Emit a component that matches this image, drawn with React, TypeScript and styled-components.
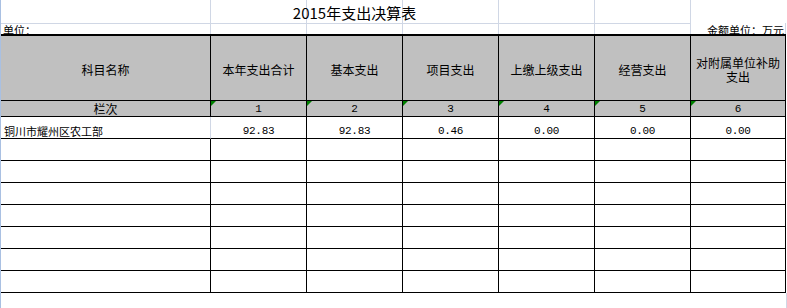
import styled, { createGlobalStyle, css } from "styled-components";

const GRID = "#d0d7e5";
const EDGE = "#a9c0e2";
const HEAD = "#c0c0c0";
const CJK = `"Noto Sans CJK SC", "Liberation Sans", sans-serif`;
const NUM = `"Liberation Mono", "DejaVu Sans Mono", monospace`;

const GlobalStyle = createGlobalStyle`
  html, body {
    margin: 0;
    padding: 0;
    background: #ffffff;
  }
  body {
    font-family: ${CJK};
    color: #000000;
  }
`;

const Sheet = styled.div`
  width: 786px;
  height: 308px;
  border-left: 1px solid ${EDGE};
  display: flex;
  flex-direction: column;
  overflow: hidden;
`;

const Cols = css`
  display: grid;
  grid-template-columns: 210px repeat(5, 96px) 95px;
  width: 785px;
`;

/* title + unit rows: plain sheet with light gridlines */
const PlainRow = styled.div<{ h: number }>`
  ${Cols};
  height: ${(p) => p.h}px;
  box-sizing: border-box;
`;

const PlainCell = styled.div<{ line?: boolean; align?: string }>`
  box-sizing: border-box;
  border-right: 1px solid ${GRID};
  border-bottom: ${(p) => (p.line ? `1px solid ${GRID}` : "none")};
  display: flex;
  align-items: flex-end;
  justify-content: ${(p) => p.align || "flex-start"};
  white-space: nowrap;
  overflow: visible;
`;

const TitleCell = styled(PlainCell)`
  grid-column: 2 / 5;
  justify-content: center;
  align-items: center;
  padding-top: 2px;
  font-size: 15px;
  background:
    linear-gradient(${GRID}, ${GRID}) no-repeat 95px 0 / 1px 100%,
    linear-gradient(${GRID}, ${GRID}) no-repeat 191px 0 / 1px 100%;
`;

const UnitText = styled.span`
  font-size: 11px;
  line-height: 12px;
  margin: 0 1px 0 2px;
  position: relative;
  top: 1px;
`;

const Table = styled.div`
  ${Cols};
  border-top: 2px solid #000000;
  grid-auto-rows: 22px;
  grid-template-rows: 65px 16px;
`;

const Cell = styled.div<{
  head?: boolean;
  soft?: boolean;
  flag?: boolean;
  left?: boolean;
  mono?: boolean;
}>`
  box-sizing: border-box;
  position: relative;
  border-right: 1px solid ${(p) => (p.soft ? GRID : "#000000")};
  border-bottom: 1px solid #000000;
  background: ${(p) => (p.head ? HEAD : "#ffffff")};
  display: flex;
  align-items: flex-end;
  justify-content: ${(p) => (p.left ? "flex-start" : "center")};
  padding-left: ${(p) => (p.left ? "3px" : "0")};
  font-family: ${(p) => (p.mono ? NUM : CJK)};
  font-size: 11px;
  letter-spacing: ${(p) => (p.mono ? "-0.3px" : "0")};
  line-height: 14px;
  white-space: nowrap;

  ${(p) =>
    p.flag &&
    css`
      &::before {
        content: "";
        position: absolute;
        top: 0;
        left: 0;
        border-top: 5px solid #008000;
        border-right: 5px solid transparent;
      }
    `}
`;

const HeadCell = styled(Cell)`
  align-items: center;
  text-align: center;
  font-size: 12px;
  padding-top: 4px;
  white-space: normal;
  padding-left: 1px;
  padding-right: 1px;
`;

const LabelCell = styled(Cell)`
  font-size: 12px;
  line-height: 15px;
`;

const Filler = styled.div`
  flex: 1;
  width: 785px;
  border-right: 1px solid ${GRID};
`;

const heads = [
  "科目名称",
  "本年支出合计",
  "基本支出",
  "项目支出",
  "上缴上级支出",
  "经营支出",
  "对附属单位补助支出",
];

const values = ["92.83", "92.83", "0.46", "0.00", "0.00", "0.00"];

function App() {
  const empty = Array.from({ length: 7 });

  return (
    <>
      <GlobalStyle />
      <Sheet>
        <PlainRow h={23}>
          <PlainCell line />
          <TitleCell line>2015年支出决算表</TitleCell>
          <PlainCell line />
          <PlainCell line />
        </PlainRow>
        <PlainRow h={11}>
          <PlainCell>
            <UnitText>单位：</UnitText>
          </PlainCell>
          <PlainCell />
          <PlainCell />
          <PlainCell />
          <PlainCell />
          <PlainCell />
          <PlainCell align="flex-end">
            <UnitText>金额单位：万元</UnitText>
          </PlainCell>
        </PlainRow>
        <Table>
          {heads.map((h) => (
            <HeadCell head key={h}>
              {h}
            </HeadCell>
          ))}

          <LabelCell head>栏次</LabelCell>
          {[1, 2, 3, 4, 5, 6].map((n) => (
            <Cell head flag mono key={n}>
              {n}
            </Cell>
          ))}

          <Cell left soft>铜川市耀州区农工部</Cell>
          {values.map((v, i) => (
            <Cell mono key={i}>
              {v}
            </Cell>
          ))}

          {empty.map((_, r) =>
            heads.map((h) => <Cell key={`${r}-${h}`} />)
          )}
        </Table>
        <Filler />
      </Sheet>
    </>
  );
}

export default App;
